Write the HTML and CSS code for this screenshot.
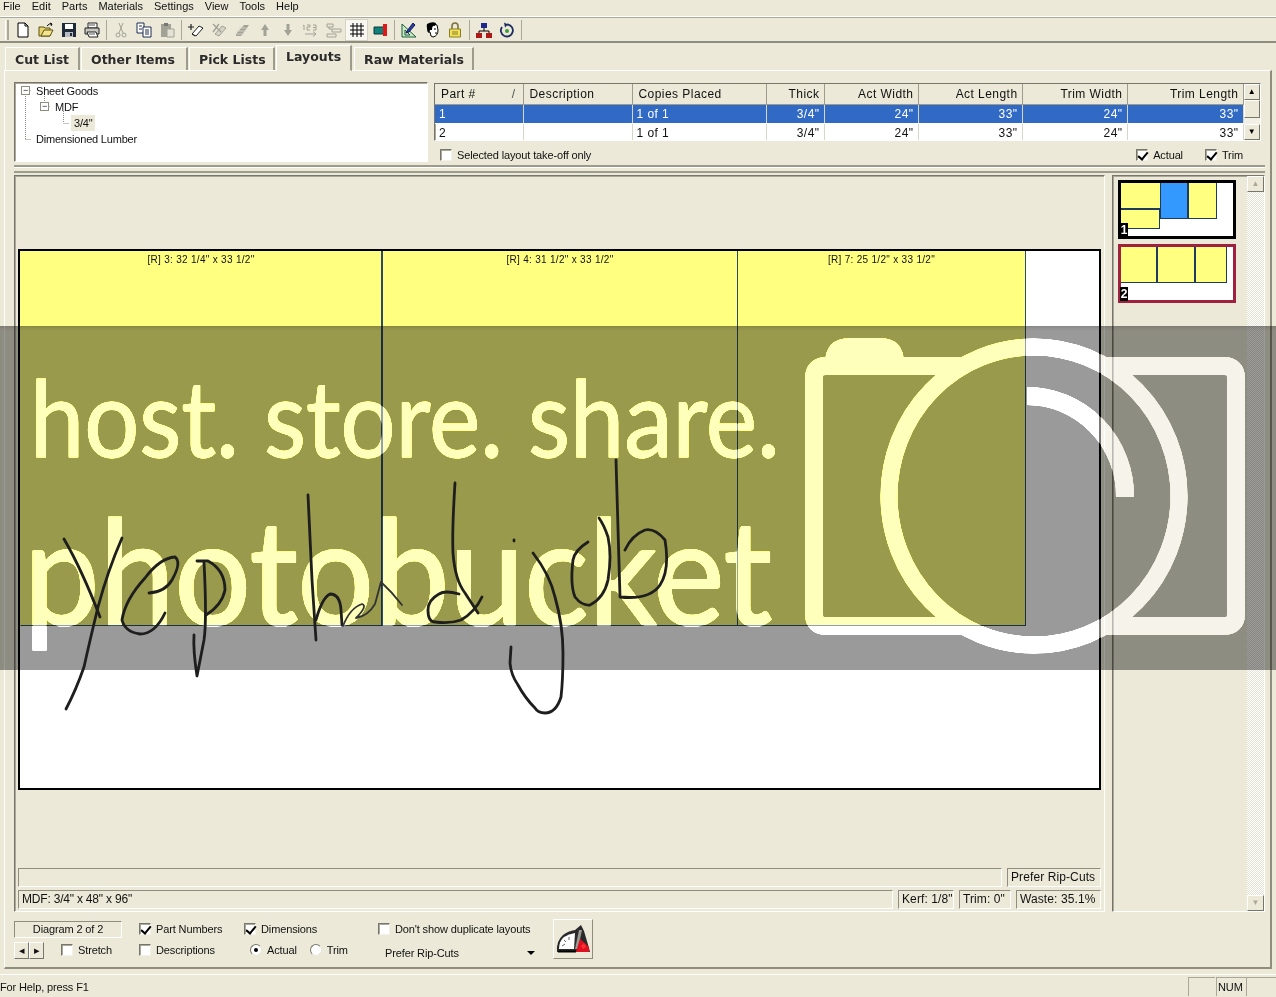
FILE: index.html
```html
<!DOCTYPE html>
<html lang="en">
<head>
  <meta charset="UTF-8">
  <title>Cut List Layouts</title>
  <link rel="stylesheet" href="styles.css">
</head>
<body>

<!-- Menu -->
<nav class="menubar">
  <span class="menu-item">File</span>
  <span class="menu-item">Edit</span>
  <span class="menu-item">Parts</span>
  <span class="menu-item">Materials</span>
  <span class="menu-item">Settings</span>
  <span class="menu-item">View</span>
  <span class="menu-item">Tools</span>
  <span class="menu-item">Help</span>
</nav>

<!-- Toolbar -->
<div class="toolbar">
  <span class="gripper"></span>
  <span class="tool"><svg viewBox="0 0 16 16"><path d="M3 1h7l3 3v11H3z" fill="#fff" stroke="#000"/><path d="M10 1v3h3" fill="none" stroke="#000"/></svg></span>
  <span class="tool"><svg viewBox="0 0 16 16"><path d="M1 5h5l1 1h5v8H1z" fill="#e8d470" stroke="#5c5010"/><path d="M3 14l3-6h9l-3 6z" fill="#f4e48c" stroke="#5c5010"/><path d="M9 4q2-3 5-2M14 2l-2-1M14 2l-1 2" fill="none" stroke="#000"/></svg></span>
  <span class="tool"><svg viewBox="0 0 16 16"><path d="M1 1h14v14H1z" fill="#1f2a3a"/><path d="M4 2h8v5H4z" fill="#fff"/><path d="M4 10h8v5H4z" fill="#b8bcc4"/><path d="M9 11h2v3H9z" fill="#1f2a3a"/></svg></span>
  <span class="tool"><svg viewBox="0 0 16 16"><path d="M4 1h9v5H4z" fill="#fff" stroke="#222"/><path d="M1 6h14v6H1z" fill="#c8c8c0" stroke="#222"/><path d="M3 10l2 5h9l-2-5z" fill="#fff" stroke="#222"/><path d="M5 3h6M5 12h6" stroke="#555"/></svg></span>
  <span class="tool-sep"></span>
  <span class="tool"><svg viewBox="0 0 16 16"><g fill="none" stroke="#a3a296"><circle cx="5" cy="13" r="2"/><circle cx="11" cy="13" r="2"/><path d="M6 11L10 1M10 11L6 1"/></g></svg></span>
  <span class="tool"><svg viewBox="0 0 16 16"><path d="M1 1h7v10H1z" fill="#fff" stroke="#1c2c50"/><path d="M7 5h8v10H7z" fill="#fff" stroke="#1c2c50"/><path d="M3 4h3M3 7h3M9 8h4M9 10h4M9 12h4" stroke="#1c2c50"/></svg></span>
  <span class="tool"><svg viewBox="0 0 16 16"><path d="M2 2h10v13H2z" fill="#a3a296"/><path d="M5 1h4v3H5z" fill="#777"/><path d="M8 7h7v8H8z" fill="#e4e2d4" stroke="#a3a296"/></svg></span>
  <span class="tool-sep"></span>
  <span class="tool"><svg viewBox="0 0 16 16"><path d="M4 12l7-8 4 2-7 8z" fill="#fff" stroke="#222"/><path d="M4 12l3 2" stroke="#222"/><path d="M3 2v6M0 5h6" stroke="#222" stroke-width="1.2"/></svg></span>
  <span class="tool"><svg viewBox="0 0 16 16"><path d="M4 12l7-8 4 2-7 8z" fill="#d4d2c4" stroke="#a3a296"/><path d="M2 2l8 8M8 2l-6 8" stroke="#a3a296" stroke-width="1.4"/></svg></span>
  <span class="tool"><svg viewBox="0 0 16 16"><path d="M2 12l8-9 5 0-8 11H2z" fill="#a3a296"/><path d="M3 9h9M5 6h7M2 12h8" stroke="#d4d2c4"/></svg></span>
  <span class="tool"><svg viewBox="0 0 16 16"><path d="M8 2l4 6H9.500v6h-3V8H4z" fill="#a3a296"/></svg></span>
  <span class="tool"><svg viewBox="0 0 16 16"><path d="M8 14l4-6H9.500V2h-3v6H4z" fill="#a3a296"/></svg></span>
  <span class="tool"><svg viewBox="0 0 16 16"><g fill="none" stroke="#a3a296"><path d="M1 8V3l-1 1M4 3h3v2H4v3h3M10 3h3v5h-3M10 5.500h3"/><path d="M2 12h11M10 9.500l3 2.500-3 2.500"/></g></svg></span>
  <span class="tool"><svg viewBox="0 0 16 16"><g fill="none" stroke="#a3a296"><path d="M1 2h6v3H1zM6 7h9v3H6zM1 12h9v3H1z"/><path d="M3 5v2h3"/></g></svg></span>
  <span class="tool tool-on"><svg viewBox="0 0 16 16"><path d="M1 4h14M1 8h14M1 12h14M4 1v14M8 1v14M12 1v14" stroke="#000" fill="none"/></svg></span>
  <span class="tool"><svg viewBox="0 0 16 16"><path d="M2 5h10v7H2z" fill="#11807a" stroke="#0a3c3c"/><path d="M11 2h4v12h-4z" fill="#e01818"/></svg></span>
  <span class="tool-sep"></span>
  <span class="tool"><svg viewBox="0 0 16 16"><path d="M1 2v13h14z" fill="#cfe8c0" stroke="#14603c"/><path d="M4 8v5h5z" fill="#ece9d8" stroke="#14603c"/><path d="M6 9l6-8 2 2-6 7-3 1z" fill="#2a3c9c" stroke="#101c60"/></svg></span>
  <span class="tool"><svg viewBox="0 0 16 16"><path d="M4 3q4-3 9 0l1 5q0 6-5 7l-2-1-1-4H4z" fill="#fff" stroke="#000"/><path d="M3 2q5-3 9-1l-1 3q-3-1-3 4H6L5 11Q2 7 3 2z" fill="#000"/><path d="M10 7h2M11 11h2" stroke="#000"/></svg></span>
  <span class="tool"><svg viewBox="0 0 16 16"><path d="M5 7V4a3 3 0 016 0v3" fill="none" stroke="#7a7240" stroke-width="1.600"/><path d="M2.500 7h11v8h-11z" fill="#f2e25a" stroke="#8a7e20"/><path d="M5 10h6M5 12h6" stroke="#8a7e20"/></svg></span>
  <span class="tool-sep"></span>
  <span class="tool"><svg viewBox="0 0 16 16"><path d="M8 5v4M3 12V9h10v3" fill="none" stroke="#000"/><path d="M5 1h6v5H5z" fill="#1c2890"/><path d="M0 11h6v5H0zM10 11h6v5h-6z" fill="#b01818"/></svg></span>
  <span class="tool"><svg viewBox="0 0 16 16"><path d="M8 2.500a6 6 0 11-5 2.500" fill="none" stroke="#1c2c60" stroke-width="1.800"/><path d="M5 .500l4 2-3 3z" fill="#1c2c60"/><circle cx="8" cy="9" r="2" fill="#3c9c3c"/></svg></span>
  <span class="tool-sep"></span>
</div>

<!-- Tabs -->
<div class="tabs">
  <span class="tab tab-cut">Cut List</span>
  <span class="tab tab-other">Other Items</span>
  <span class="tab tab-pick">Pick Lists</span>
  <span class="tab tab-active">Layouts</span>
  <span class="tab tab-raw">Raw Materials</span>
</div>

<main class="pane">
  <section class="top-row">
    <!-- Material tree -->
    <div class="tree sunken">
      <svg class="tree-lines" width="120" height="70"><path d="M10.500 12v45M10.500 8.500h6M10.500 57.500h6M29.500 12v17M29.500 24.500h6M48.500 29v12M48.500 41.500h6" stroke="#8a8a80" stroke-dasharray="1 1" fill="none"/></svg>
      <div class="tree-row"><span class="expander">−</span>Sheet Goods</div>
      <div class="tree-row tree-l1"><span class="expander">−</span>MDF</div>
      <div class="tree-row tree-l2"><span class="tree-sel">3/4"</span></div>
      <div class="tree-row tree-leaf">Dimensioned Lumber</div>
    </div>

    <!-- Parts grid -->
    <div class="grid-wrap">
      <div class="grid-box sunken">
        <table class="grid">
          <colgroup>
            <col class="c-part"><col class="c-desc"><col class="c-copies"><col class="c-thick">
            <col class="c-awidth"><col class="c-alength"><col class="c-twidth"><col class="c-tlength">
          </colgroup>
          <tr>
            <th><span class="sort-head">Part #<i>/</i></span></th>
            <th>Description</th><th>Copies Placed</th>
            <th class="num">Thick</th><th class="num">Act Width</th><th class="num">Act Length</th>
            <th class="num">Trim Width</th><th class="num">Trim Length</th>
          </tr>
          <tr class="row-sel">
            <td>1</td><td></td><td>1 of 1</td><td class="num">3/4"</td><td class="num">24"</td><td class="num">33"</td><td class="num">24"</td><td class="num">33"</td>
          </tr>
          <tr>
            <td>2</td><td></td><td>1 of 1</td><td class="num">3/4"</td><td class="num">24"</td><td class="num">33"</td><td class="num">24"</td><td class="num">33"</td>
          </tr>
        </table>
        <div class="grid-scroll">
          <span class="sb-btn">▲</span>
          <span class="sb-thumb"></span>
          <span class="sb-track"></span>
          <span class="sb-btn">▼</span>
        </div>
      </div>
      <div class="grid-opts">
        <label class="check"><span class="box"></span>Selected layout take-off only</label>
        <span class="spacer"></span>
        <label class="check"><span class="box on"></span>Actual</label>
        <label class="check check-trim"><span class="box on"></span>Trim</label>
      </div>
    </div>
  </section>

  <div class="splitter"></div>

  <section class="mid-row">
    <!-- Layout diagram -->
    <div class="diagram sunken">
      <div class="sheet">
        <div class="part part-1">[R] 3: 32 1/4" x 33 1/2"</div>
        <div class="part part-2">[R] 4: 31 1/2" x 33 1/2"</div>
        <div class="part part-3">[R] 7: 25 1/2" x 33 1/2"</div>
      </div>
      <div class="status-rows">
        <div class="status-row">
          <span class="field field-grow"></span>
          <span class="field field-rip">Prefer Rip-Cuts</span>
        </div>
        <div class="status-row">
          <span class="field field-grow">MDF: 3/4" x 48" x 96"</span>
          <span class="field field-kerf">Kerf: 1/8"</span>
          <span class="field field-trim">Trim: 0"</span>
          <span class="field field-waste">Waste: 35.1%</span>
        </div>
      </div>
    </div>

    <!-- Thumbnails -->
    <aside class="thumbs sunken">
      <div class="thumb-list">
        <div class="thumb">
          <div class="thumb-parts">
            <div class="t-stack"><span class="t-part t-a"></span><span class="t-part t-b"></span></div>
            <span class="t-part t-blue"></span>
            <span class="t-part t-c"></span>
          </div>
          <span class="thumb-num">1</span>
        </div>
        <div class="thumb thumb-cur">
          <div class="thumb-parts">
            <span class="t-part t-d"></span>
            <span class="t-part t-e"></span>
            <span class="t-part t-f"></span>
          </div>
          <span class="thumb-num">2</span>
        </div>
      </div>
      <div class="thumb-scroll">
        <span class="sb-btn sb-dim">▲</span>
        <span class="sb-track"></span>
        <span class="sb-btn sb-dim">▼</span>
      </div>
    </aside>
  </section>

  <!-- Bottom options -->
  <section class="controls">
    <div class="col col-a">
      <div class="ctrl-row"><span class="diagram-no">Diagram 2 of 2</span></div>
      <div class="ctrl-row">
        <span class="nav-btns"><span class="nav-btn">◂</span><span class="nav-btn">▸</span></span>
        <label class="check"><span class="box"></span>Stretch</label>
      </div>
    </div>
    <div class="col col-b">
      <div class="ctrl-row"><label class="check"><span class="box on"></span>Part Numbers</label></div>
      <div class="ctrl-row"><label class="check"><span class="box"></span>Descriptions</label></div>
    </div>
    <div class="col col-c">
      <div class="ctrl-row"><label class="check"><span class="box on"></span>Dimensions</label></div>
      <div class="ctrl-row radios">
        <label class="check"><span class="radio on"></span>Actual</label>
        <label class="check"><span class="radio"></span>Trim</label>
      </div>
    </div>
    <div class="col col-d">
      <div class="ctrl-row"><label class="check"><span class="box"></span>Don't show duplicate layouts</label></div>
      <div class="ctrl-row combo"><span>Prefer Rip-Cuts</span><span class="combo-arrow"></span></div>
    </div>
    <button class="optimize">
      <svg viewBox="0 0 36 30" width="36" height="30">
        <path d="M2 28q-1-11 6-17 5-4 12-5l6-5 3 6 5 17 1 4z" fill="#2a2a2a"/>
        <path d="M4 25q0-8 5-12 5-3 11-4l-1 16z" fill="#fff"/>
        <path d="M7 22l3-2M9 16l2 2M14 13l0 3" stroke="#666" fill="none"/>
        <path d="M20 25L24 6l3 0-4 19z" fill="#9a9a92"/>
        <path d="M21 28l4-13 9 8 0 5z" fill="#e01020"/>
        <path d="M26 22l3-3 2 4-3 2z" fill="#ff3030"/>
        <path d="M3 27.500h18" stroke="#000" stroke-width="2"/>
      </svg>
    </button>
  </section>
</main>

<!-- Status bar -->
<footer class="statusbar">
  <span class="help">For Help, press F1</span>
  <span class="sbar-pane sbar-a"></span>
  <span class="sbar-pane sbar-num">NUM</span>
  <span class="sbar-pane sbar-b"></span>
</footer>

<!-- Watermark band across the shot -->
<div class="watermark">
  <svg width="1276" height="344" viewBox="0 326 1276 344">
    <text class="wm-small" x="30" y="457" textLength="750" lengthAdjust="spacingAndGlyphs">host. store. share.</text>
    <text class="wm-big" x="24" y="625" textLength="748" lengthAdjust="spacingAndGlyphs">photobucket</text>
    <path class="wm-fill" d="M825 364Q825 338 850 338H880Q904 338 904 364z"/>
    <path class="wm-line" d="M826 366H1224Q1236 366 1236 378V614Q1236 626 1224 626H826Q814 626 814 614V378Q814 366 826 366z"/>
    <ellipse class="wm-disc" cx="1034" cy="496" rx="145" ry="149"/>
    <path class="wm-line" d="M1027 396A98 100 0 0 1 1125 497"/>
  </svg>
</div>

<!-- Scribble on top of the shot -->
<svg class="scribble" width="1276" height="997" viewBox="0 0 1276 997">
  <path d="M64 539Q82 570 100 617"/>
  <path d="M122 538Q108 570 98 607Q90 640 84 667Q76 690 66 709"/>
  <path d="M149 593Q165 592 172 580Q182 562 175 557Q160 558 145 578Q125 600 122 620Q125 632 140 634Q155 634 165 613"/>
  <path d="M197 561L208 561Q225 570 225 590Q222 605 206 615"/>
  <path d="M204 562Q207 620 204 640L197 676Q193 650 194 635"/>
  <path d="M308 495Q311 560 312 580L316 640"/>
  <path d="M316 620Q322 598 330 594Q340 594 341 610L342 625"/>
  <path class="thin" d="M343 626Q350 608 362 604Q368 606 356 618Q368 616 375 604L381 582Q392 592 402 605"/>
  <path d="M455 483Q452 530 453 553Q455 580 465 593L478 613"/>
  <path d="M459 594Q445 590 439 594Q428 600 428 610Q428 622 435 622Q450 624 461 620Q475 612 482 597"/>
  <path d="M514 540L514 541"/>
  <path d="M533 553Q550 575 555 597Q563 625 563 653Q563 680 561 697Q556 713 545 713Q538 713 535 708Q525 698 518 685Q511 675 510 663L511 647"/>
  <path d="M588 542Q575 550 573 560Q570 585 575 597Q582 606 590 605Q604 598 608 580Q612 555 608 537Q604 525 599 518"/>
  <path d="M616 460L620 597Q650 600 660 585Q670 570 665 540Q655 528 645 530Q632 535 625 550"/>
</svg>

</body>
</html>
```

FILE: styles.css
```css
* {
  box-sizing: border-box;
}

body {
  position: relative;
  width: 1276px;
  height: 997px;
  margin: 0;
  overflow: hidden;
  background-color: #ece9d8;
  color: #111;
  font-family: "Liberation Sans", Arial, sans-serif;
  font-size: 12px;
  display: flex;
  flex-direction: column;
}

.sunken {
  border: 1px solid;
  border-color: #77766a #fff #fff #77766a;
  box-shadow: inset 1px 1px 0 #aca899;
}

/* menu */
.menubar {
  height: 17px;
  padding: 0 0 3px 3px;
  display: flex;
  gap: 11px;
  align-items: center;
  line-height: 13px;
  border-bottom: 1px solid #fff;
  font-size: 11px;
}

/* toolbar */
.toolbar {
  height: 26px;
  display: flex;
  align-items: center;
  padding-left: 5px;
  border-top: 1px solid #aca899;
  border-bottom: 2px solid #8f8d7e;
}

.gripper {
  width: 4px;
  height: 20px;
  margin-right: 2px;
  border-left: 1px solid #fff;
  border-right: 2px solid #aca899;
}

.tool {
  width: 23px;
  height: 22px;
  display: flex;
  align-items: center;
  justify-content: center;
}

.tool svg {
  width: 16px;
  height: 16px;
}

.tool-on {
  background-color: #f8f7f2;
  border: 1px solid #d6d3c4;
}

.tool-sep {
  width: 6px;
  height: 20px;
  background: linear-gradient(#aca899, #aca899) center / 1px 100% no-repeat;
}

/* tabs */
.tabs {
  height: 27px;
  padding: 3px 0 0 5px;
  display: flex;
  align-items: flex-end;
}

.tab {
  height: 23px;
  padding: 4px 0 0 9px;
  font-family: "DejaVu Sans", Verdana, sans-serif;
  font-weight: bold;
  font-size: 12.5px;
  line-height: 16px;
  color: #2b2b2b;
  border-top: 1px solid #fff;
  border-left: 1px solid #fff;
  border-right: 2px solid #9d9b8c;
}

.tab-cut { width: 75px; }
.tab-other { width: 107px; margin-left: 1px; }
.tab-pick { width: 86px; margin-left: 1px; }
.tab-raw { width: 120px; margin-left: 2px; }

.tab-active {
  width: 76px;
  height: 26px;
  margin-left: 1px;
  padding-top: 3px;
  border-bottom: 1px solid #ece9d8;
  margin-bottom: -1px;
  position: relative;
}

/* main pane */
.pane {
  width: 1268px;
  height: 899px;
  margin-left: 4px;
  padding: 11px 0 0 9px;
  border: 1px solid;
  border-color: #fff #8f8d7e #8f8d7e #fff;
  border-bottom-width: 2px;
  border-right-width: 2px;
}

.top-row {
  height: 83px;
  display: flex;
  gap: 6px;
}

.tree {
  position: relative;
  width: 414px;
  height: 80px;
  background-color: #fff;
  font-size: 11px;
}

.tree-lines {
  position: absolute;
  left: 0;
  top: -1px;
}

.tree-row {
  position: relative;
  height: 16px;
  line-height: 16px;
  padding-left: 21px;
  display: flex;
  align-items: center;
  letter-spacing: -.2px;
}

.tree-row .expander {
  position: absolute;
  left: 6px;
  top: 3px;
  width: 9px;
  height: 9px;
  border: 1px solid #8f8d7e;
  background-color: #fff;
  font-size: 9px;
  line-height: 7px;
  text-align: center;
}

.tree-l1 { padding-left: 40px; }
.tree-l1 .expander { left: 25px; }
.tree-l2 { padding-left: 56px; }
.tree-sel { background-color: #ece9d8; padding: 0 3px; }

.grid-wrap {
  width: 827px;
  padding-top: 1px;
}

.grid-box {
  height: 58px;
  display: flex;
  background-color: #fff;
  overflow: hidden;
}

.grid {
  width: 808px;
  table-layout: fixed;
  border-collapse: collapse;
  letter-spacing: .45px;
}

.c-part { width: 88px; }
.c-desc { width: 109px; }
.c-copies { width: 134px; }
.c-thick { width: 58px; }
.c-awidth { width: 94px; }
.c-alength { width: 104px; }
.c-twidth { width: 105px; }
.c-tlength { width: 116px; }

.grid th {
  height: 20px;
  padding: 0 4px 0 6px;
  font-weight: normal;
  text-align: left;
  background-color: #ece9d8;
  border-right: 1px solid #9d9b8c;
  border-bottom: 1px solid #9d9b8c;
}

.grid td {
  height: 19px;
  padding: 0 4px 0 4px;
  border-right: 1px solid #d8d6c8;
  border-bottom: 1px solid #fff;
  white-space: nowrap;
}

.grid .num {
  text-align: right;
}

.row-sel td {
  background-color: #316ac5;
  color: #fff;
}

.sort-head {
  display: flex;
  justify-content: space-between;
  padding-right: 3px;
}

.sort-head i {
  font-style: normal;
  color: #555;
}

.grid-scroll,
.thumb-scroll {
  width: 17px;
  display: flex;
  flex-direction: column;
  background-color: #f2f0e6;
}

.sb-btn {
  height: 16px;
  flex: none;
  background-color: #ece9d8;
  border: 1px solid;
  border-color: #fff #77766a #77766a #fff;
  font-size: 8px;
  line-height: 14px;
  text-align: center;
  color: #000;
}

.sb-dim {
  color: #aca899;
}

.sb-thumb {
  height: 18px;
  flex: none;
  background-color: #ece9d8;
  border: 1px solid;
  border-color: #fff #77766a #77766a #fff;
}

.sb-track {
  flex: 1;
}

.grid-opts {
  height: 25px;
  display: flex;
  align-items: center;
  padding: 2px 18px 0 6px;
  font-size: 11px;
  letter-spacing: -.13px;
}

.spacer {
  flex: 1;
}

.check {
  display: flex;
  align-items: center;
  gap: 5px;
  white-space: nowrap;
}

.check-trim {
  margin-left: 22px;
}

.box {
  position: relative;
  width: 12px;
  height: 12px;
  flex: none;
  background-color: #fff;
  border: 1px solid;
  border-color: #77766a #f4f2e8 #f4f2e8 #77766a;
  box-shadow: inset 1px 1px 0 #aca899;
}

.box.on::after {
  content: "";
  position: absolute;
  left: 3px;
  top: 0;
  width: 4px;
  height: 8px;
  border: solid #000;
  border-width: 0 2px 2px 0;
  transform: rotate(40deg);
}

.radio {
  position: relative;
  width: 12px;
  height: 12px;
  flex: none;
  border-radius: 50%;
  background-color: #fff;
  border: 1px solid;
  border-color: #77766a #e8e6da #e8e6da #77766a;
}

.radio.on::after {
  content: "";
  position: absolute;
  left: 3px;
  top: 3px;
  width: 4px;
  height: 4px;
  border-radius: 50%;
  background-color: #000;
}

.splitter {
  width: 1251px;
  height: 8px;
  margin-bottom: 2px;
  border-top: 2px solid #9d9b8c;
  border-bottom: 2px solid #9d9b8c;
  box-shadow: inset 0 1px 0 #fff;
}

.mid-row {
  height: 737px;
  display: flex;
  gap: 7px;
}

/* diagram */
.diagram {
  width: 1091px;
  padding: 73px 3px 2px 3px;
  display: flex;
  flex-direction: column;
}

.sheet {
  height: 541px;
  display: flex;
  align-items: flex-start;
  background-color: #fff;
  border: 2px solid #000;
}

.part {
  height: 375px;
  padding-top: 3px;
  background-color: #ffff80;
  border-right: 1px solid #2c4a6a;
  border-bottom: 1px solid #2c4a6a;
  text-align: center;
  font-size: 10px;
  line-height: 12px;
  letter-spacing: .3px;
}

.part-1 { width: 362px; border-left: 1px solid #ffff80; }
.part-2 { width: 356px; border-left: 1px solid #2c4a6a; }
.part-3 { width: 288px; }

.status-rows {
  margin-top: auto;
  display: flex;
  flex-direction: column;
  gap: 3px;
}

.status-row {
  display: flex;
  gap: 5px;
}

.field {
  height: 19px;
  padding-left: 3px;
  line-height: 16px;
  border: 1px solid;
  border-color: #8f8d7e #fff #fff #8f8d7e;
  white-space: nowrap;
  letter-spacing: .1px;
}

.field-grow { flex: 1; letter-spacing: -.2px; }
.field-rip { width: 94px; }
.field-kerf { width: 56px; }
.field-trim { width: 52px; }
.field-waste { width: 85px; }

/* thumbnails */
.thumbs {
  width: 153px;
  display: flex;
}

.thumb-list {
  width: 135px;
  padding: 4px 0 0 5px;
  display: flex;
  flex-direction: column;
  gap: 5px;
}

.thumb {
  position: relative;
  width: 118px;
  height: 59px;
  background-color: #fff;
  border: 3px solid #000;
}

.thumb-cur {
  border-color: #a0203f;
}

.thumb-parts {
  display: flex;
  align-items: flex-start;
}

.t-part {
  display: block;
  height: 36px;
  background-color: #ffff80;
  border: 1px solid #1e3a5c;
  border-width: 0 1px 1px 0;
}

.t-stack { width: 39px; }
.t-a { height: 27px; width: 39px; border-width: 0 0 2px 0; }
.t-b { height: 19px; width: 39px; }
.t-blue { width: 29px; background-color: #3399ff; border-right-width: 2px; border-left: 1px solid #1e3a5c; }
.t-c { width: 28px; }
.thumb-cur .t-part { border-right-width: 2px; }
.t-d { width: 37px; }
.t-e { width: 38px; }
.thumb-cur .t-f { width: 31px; border-right-width: 1px; }

.thumb-num {
  position: absolute;
  left: -1px;
  bottom: -1px;
  width: 8px;
  height: 14px;
  background-color: #000;
  color: #fff;
  font-weight: bold;
  font-size: 12px;
  line-height: 14px;
  text-align: center;
}

.thumb-scroll {
  margin-left: -1px;
  background: repeating-conic-gradient(#fff 0 25%, #e4e2d4 0 50%) 0 0 / 2px 2px;
}

/* bottom controls */
.controls {
  height: 42px;
  margin-top: 6px;
  display: flex;
  align-items: flex-start;
  font-size: 11px;
  letter-spacing: -.13px;
}

.col {
  display: flex;
  flex-direction: column;
}

.col-a { width: 125px; }
.col-b { width: 105px; }
.col-c { width: 134px; }
.col-d { width: 175px; }

.ctrl-row {
  height: 21px;
  display: flex;
  align-items: center;
}

.diagram-no {
  width: 108px;
  height: 17px;
  margin-top: 2px;
  line-height: 15px;
  text-align: center;
  border: 1px solid;
  border-color: #8f8d7e #fff #fff #8f8d7e;
}

.nav-btns {
  display: flex;
  margin-right: 17px;
  margin-top: 2px;
}

.nav-btn {
  width: 15px;
  height: 17px;
  border: 1px solid;
  border-color: #fff #77766a #77766a #fff;
  font-size: 11px;
  line-height: 14px;
  text-align: center;
}

.radios {
  padding-left: 6px;
  gap: 13px;
}

.combo {
  position: relative;
  width: 165px;
  padding-left: 7px;
  justify-content: space-between;
  margin-top: 3px;
}

.combo-arrow {
  width: 0;
  height: 0;
  margin-right: 8px;
  border: 4px solid transparent;
  border-top-color: #000;
  border-bottom-width: 0;
}

.optimize {
  width: 40px;
  height: 40px;
  margin: 1px 0 0 0;
  padding: 0;
  display: flex;
  align-items: center;
  justify-content: center;
  background-color: #ece9d8;
  border: 1px solid;
  border-color: #fff #8f8d7e #8f8d7e #fff;
}

/* status bar */
.statusbar {
  height: 22px;
  margin-top: 5px;
  border-top: 1px solid #fff;
  display: flex;
  align-items: flex-end;
  font-size: 11px;
  letter-spacing: -.13px;
}

.help {
  margin-right: auto;
  line-height: 18px;
}

.sbar-pane {
  height: 19px;
  border: solid #aca899;
  border-width: 1px 0 0 1px;
  line-height: 18px;
}

.sbar-a { width: 27px; }
.sbar-num { width: 30px; margin-left: 1px; padding-left: 1px; }
.sbar-b { width: 30px; }

/* watermark: hard-light darkens under the band colour and lightens under the glyphs */
.watermark {
  position: absolute;
  left: 0;
  top: 326px;
  width: 1276px;
  height: 344px;
  background-color: #4d4d4d;
  box-shadow: inset 0 4px 3px -2px #454545;
  mix-blend-mode: hard-light;
}

.watermark svg {
  display: block;
}

.wm-small,
.wm-big {
  font-family: Lato, "Open Sans", sans-serif;
  fill: #bcbcbc;
  stroke: #bcbcbc;
  stroke-linejoin: round;
}

.wm-small {
  font-size: 106px;
  stroke-width: 1px;
}

.wm-big {
  font-size: 145px;
  stroke-width: 2px;
}

.wm-line {
  fill: none;
  stroke: #bcbcbc;
  stroke-width: 18px;
}

.wm-fill {
  fill: #bcbcbc;
}

.wm-disc {
  fill: #4d4d4d;
  stroke: #bcbcbc;
  stroke-width: 17px;
}

.scribble {
  position: absolute;
  left: 0;
  top: 0;
  pointer-events: none;
}

.scribble path {
  fill: none;
  stroke: #1e1e1e;
  stroke-width: 2.8px;
  stroke-linecap: round;
  stroke-linejoin: round;
}

.scribble .thin {
  stroke: #333;
  stroke-width: 1.8px;
}
```
